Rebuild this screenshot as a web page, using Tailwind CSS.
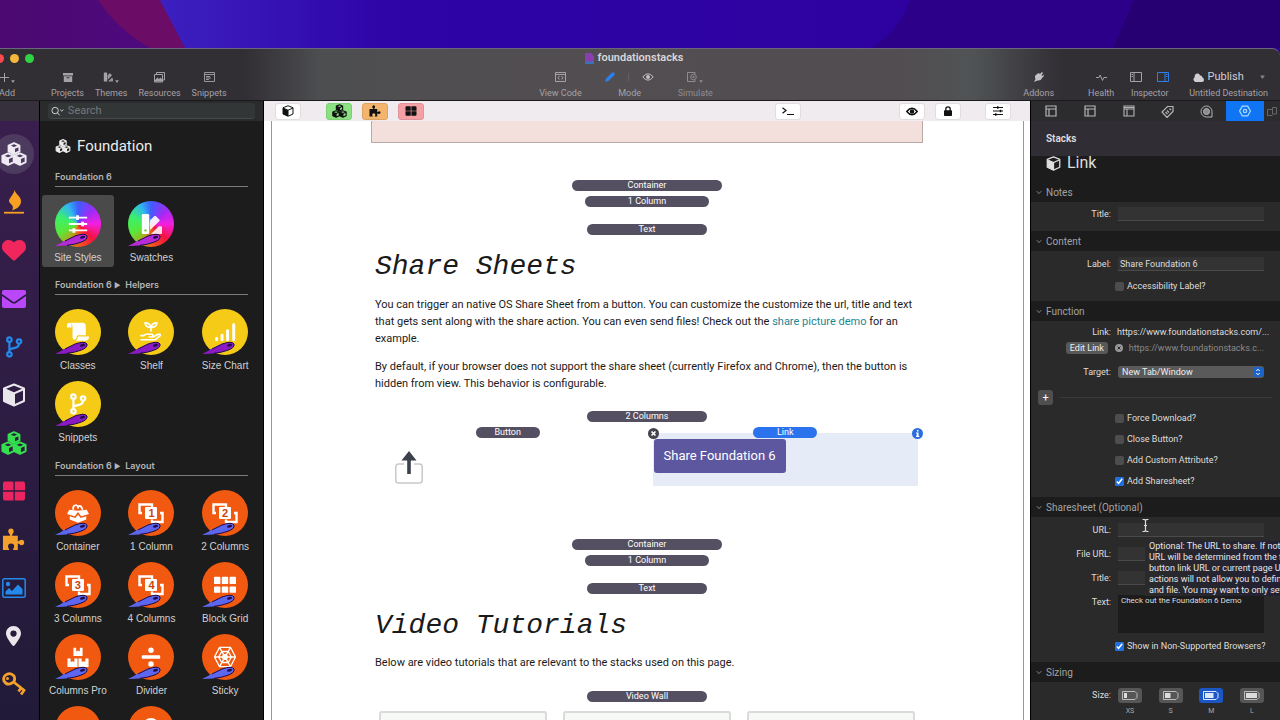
<!DOCTYPE html>
<html lang="en">
<head>
    <meta charset="UTF-8">
    <meta name="viewport" content="width=device-width, initial-scale=1.0">
    <title>foundationstacks</title>
    <script src="https://cdn.jsdelivr.net/npm/@tailwindcss/browser@4"></script>
</head>
<body class="h-screen overflow-hidden flex flex-col bg-[#2b0096] font-['Roboto',sans-serif] text-[9px] text-gray-200">

    <!-- Icon sprite -->
    <svg class="hidden">
        <symbol id="cube" viewBox="0 0 24 24">
            <path d="M12 1.5 22 5.5V18L12 22.5 2 18V5.5Z" fill="none" stroke="currentColor" stroke-width="2" stroke-linejoin="round"/>
            <path d="M2 6 12 10.5V22.5L2 18Z" fill="currentColor"/>
            <path d="M2 6 12 10.5 22 6M12 10.5V22" fill="none" stroke="currentColor" stroke-width="2"/>
        </symbol>
        <symbol id="cubes" viewBox="0 0 24 22">
            <g fill="none" stroke="currentColor" stroke-width="1.8" stroke-linejoin="round">
                <path d="M12 1 17 3.2V8.6L12 11 7 8.6V3.2ZM7 3.4 12 5.6 17 3.4M12 5.6V11"/>
                <path d="M6.5 10.5 11.7 12.7V18.4L6.5 21 1.3 18.4V12.7ZM1.3 12.8 6.5 15 11.7 12.8M6.5 15V21"/>
                <path d="M17.5 10.5 22.7 12.7V18.4L17.5 21 12.3 18.4V12.7ZM12.3 12.8 17.5 15 22.7 12.8M17.5 15V21"/>
            </g>
            <path d="M7 3.4 12 5.6V11L7 8.6ZM1.3 12.8 6.5 15V21L1.3 18.4ZM12.3 12.8 17.5 15V21L12.3 18.4Z" fill="currentColor"/>
        </symbol>
        <symbol id="flame" viewBox="0 0 24 24">
            <path d="M12.5 0C14 5 19.500 6.500 19 12C18.500 16 15 19 10 20.500C12 17 10.500 15.500 8 13C4.500 9.500 11.500 6 12.500 0Z" fill="currentColor"/>
            <path d="M2 21.800H22V23.600H2Z" fill="currentColor"/>
        </symbol>
        <symbol id="heart" viewBox="0 0 512 512">
            <path fill="currentColor" d="M47.6 300.4L228.3 469.1c7.5 7 17.4 10.9 27.7 10.9s20.2-3.9 27.7-10.9L464.4 300.4c30.4-28.3 47.6-68 47.6-109.500v-5.8c0-69.9-50.5-129.5-119.4-141C347 36.5 300.6 51.4 268 84L256 96 244 84c-32.6-32.6-79-47.5-124.6-39.900C50.5 55.6 0 115.2 0 185.1v5.8c0 41.5 17.2 81.2 47.6 109.5z"/>
        </symbol>
        <symbol id="mail" viewBox="0 0 24 24">
            <rect y="3" width="24" height="18" rx="2" fill="currentColor"/>
            <path d="M0 8 10 15Q12 16.400 14 15L24 8" fill="none" stroke="#2a1b42" stroke-width="1.6"/>
        </symbol>
        <symbol id="branch" viewBox="0 0 24 24">
            <g fill="none" stroke="currentColor" stroke-width="2.400">
                <circle cx="7" cy="4" r="2.4"/><circle cx="7" cy="20" r="2.4"/><circle cx="17.500" cy="6" r="2.4"/>
                <path d="M7 6.500V17.500M17.500 8.500C17.500 13 13 12.500 8 14.500"/>
            </g>
        </symbol>
        <symbol id="squares" viewBox="0 0 24 24">
            <path fill="currentColor" d="M3 2.500h7.500a1 1 0 0 1 1 1V11.300H1V4.500a2 2 0 0 1 2-2zM12.800 2.500H21a2 2 0 0 1 2 2v6.800H12.800zM1 12.700h10.500V21.500H3a2 2 0 0 1-2-2zM12.800 12.700H23v6.800a2 2 0 0 1-2 2h-8.200z"/>
        </symbol>
        <symbol id="puzzle" viewBox="0 0 24 24">
            <path fill="currentColor" d="M1 8H8.500C8.500 6.500 6.500 5.500 6.500 3.500A2.800 3 0 0 1 12.200 3.500C12.200 5.500 10.500 6.500 10.500 8H16.500V14C18 14 18.500 12.300 20.500 12.300A2.600 2.800 0 0 1 20.500 18C18.500 18 18 16.300 16.500 16.300V23H11.500C11.500 21.500 12.700 21 12.700 19.300A3.200 3 0 0 0 6.300 19.300C6.300 21 7.500 21.500 7.500 23H1Z"/>
        </symbol>
        <symbol id="photo" viewBox="0 0 24 24">
            <rect x=".8" y="2.800" width="22.400" height="18.400" rx="1.500" fill="none" stroke="currentColor" stroke-width="1.500"/>
            <circle cx="6" cy="8" r="2.200" fill="currentColor"/>
            <path d="M3.500 18.500V15.500L7 12 10 15 16 8.500 20.500 13V18.500Z" fill="currentColor"/>
        </symbol>
        <symbol id="pin" viewBox="0 0 384 512">
            <path fill="currentColor" fill-rule="evenodd" d="M215.7 499.2C267 435 384 279.4 384 192C384 86 298 0 192 0S0 86 0 192c0 87.4 117 243 168.3 307.2c12.3 15.3 35.1 15.3 47.4 0zM192 112a80 80 0 1 0 0 160 80 80 0 1 0 0-160z"/>
        </symbol>
        <symbol id="key" viewBox="0 0 24 24">
            <g fill="none" stroke="currentColor" stroke-width="2.800">
                <path d="M3 3.500Q8-.5 12 4 14 9 10 11 5 14 2 9 1 6 3 3.500Z"/>
                <path d="M11 9.500 23 19M19 16 16.500 19.500M22 18.500 19 22.500"/>
            </g>
            <circle cx="5.500" cy="6.500" r="1.500" fill="currentColor"/>
        </symbol>
        <symbol id="layout" viewBox="0 0 12 12">
            <path d="M1 1H11V11H1ZM1 4H11M4 4V11" fill="none" stroke="currentColor" stroke-width="1.200"/>
        </symbol>
        <symbol id="eye" viewBox="0 0 16 12">
            <path d="M1 6Q8-2.500 15 6 8 14.500 1 6Z" fill="none" stroke="currentColor" stroke-width="1.300"/>
            <circle cx="8" cy="6" r="2.600" fill="currentColor"/>
        </symbol>
        <symbol id="sliders" viewBox="0 0 24 24">
            <path d="M2 5H22M2 12H22M2 19H22" stroke="currentColor" stroke-width="2"/>
            <path d="M10 2.500h3v5h-3zM15.500 9.500h3v5h-3zM6 16.500h3v5H6z" fill="currentColor"/>
        </symbol>
        <symbol id="swatches" viewBox="0 0 24 24">
            <rect x="2" y="1" width="8" height="22" rx="1.500" fill="currentColor"/>
            <path d="M11 8 15.500 3.500Q16.500 2.500 17.500 3.500L21 7Q22 8 21 9L11 18.500Z" fill="currentColor" fill-opacity=".9"/>
            <path d="M12 23 20.500 14.500H23Q24 14.500 24 15.500V22Q24 23 23 23Z" fill="currentColor" fill-opacity=".85"/>
            <circle cx="6" cy="19" r="1.300" fill="#76c83a"/>
        </symbol>
        <symbol id="scroll" viewBox="0 0 24 24">
            <path d="M0 5Q0 2 2.500 2T5 5V7H0ZM4 2H17Q20.500 2 20.500 6V15.500H12Q10.500 15.500 10.500 17.500T8.500 20.500Q6 20.500 6 17V6Q6 3 4 2ZM12 17H24Q24 21.500 20 21.500H9.500Q12 20.500 12 17Z" fill="currentColor"/>
        </symbol>
        <symbol id="plant" viewBox="0 0 24 24">
            <g fill="none" stroke="currentColor" stroke-width="1.800" stroke-linecap="round" stroke-linejoin="round">
                <path d="M12 11V7Q11 2 5.500 2 6 7 12 7 18 7 18.500 2 13 2 12 7"/>
                <path d="M1 16H4Q7 13.500 10 14.500H13.500Q15 16.500 12.500 17.500H10M14 17.500 20 14.500Q23 14 22 16L16.500 20.500H1"/>
            </g>
        </symbol>
        <symbol id="chart" viewBox="0 0 24 24">
            <path d="M2.800 20.500V19M8.800 20.500V15.500M14.800 20.500V10.500M21.500 20.500V4" stroke="currentColor" stroke-width="3.200" stroke-linecap="round"/>
        </symbol>
        <symbol id="box" viewBox="0 0 24 24">
            <path d="M7 8.500Q6 4 9.500 3.500 11 3 12 5.500M12 5.500Q15 2 17 8.500M12 5.500V7" fill="none" stroke="currentColor" stroke-width="2"/>
            <path d="M2.500 8.500 12 9.500 21.500 8.500 24 13 15.500 15.500 12 11 8.500 15.500 0 13ZM3 15.500 9 17.500 12 14 15 17.500 21 15.500V19L12 22.500 3 19Z" fill="currentColor"/>
        </symbol>
        <symbol id="grid6" viewBox="0 0 24 24">
            <path fill="currentColor" d="M1 3h5a1 1 0 0 1 1 1v6a1 1 0 0 1-1 1H1a1 1 0 0 1-1-1V4a1 1 0 0 1 1-1zM9.500 3h5a1 1 0 0 1 1 1v6a1 1 0 0 1-1 1h-5a1 1 0 0 1-1-1V4a1 1 0 0 1 1-1zM18 3h5a1 1 0 0 1 1 1v6a1 1 0 0 1-1 1h-5a1 1 0 0 1-1-1V4a1 1 0 0 1 1-1zM1 13.500h5a1 1 0 0 1 1 1v5a1 1 0 0 1-1 1H1a1 1 0 0 1-1-1v-5a1 1 0 0 1 1-1zM9.500 13.500h5a1 1 0 0 1 1 1v5a1 1 0 0 1-1 1h-5a1 1 0 0 1-1-1v-5a1 1 0 0 1 1-1zM18 13.500h5a1 1 0 0 1 1 1v5a1 1 0 0 1-1 1h-5a1 1 0 0 1-1-1v-5a1 1 0 0 1 1-1z"/>
        </symbol>
        <symbol id="boxes" viewBox="0 0 24 24">
            <path fill="currentColor" d="M7 2h3v4l2-1 2 1V2h3v9H7zM.5 13.500h3.500v4l2-1 2 1v-4h3.500V23H.5zM12.500 13.500H16v4l2-1 2 1v-4h3.500V23h-11z"/>
        </symbol>
        <symbol id="divide" viewBox="0 0 24 24">
            <circle cx="12" cy="4.500" r="3" fill="currentColor"/><circle cx="12" cy="19.500" r="3" fill="currentColor"/>
            <rect x="2" y="10" width="20" height="4" rx="1" fill="currentColor"/>
        </symbol>
        <symbol id="web" viewBox="0 0 24 24">
            <path d="M6 1.500H18L23.500 12 18 22.500H6L.5 12ZM8.500 6H15.500L19 12 15.500 18H8.500L5 12ZM10.500 9.500H13.500L15 12 13.500 14.500H10.500L9 12ZM6 1.500 18 22.500M18 1.500 6 22.500M.5 12H23.500" fill="none" stroke="currentColor" stroke-width="1.400"/>
        </symbol>
        <symbol id="brackets" viewBox="0 0 26 22">
            <path d="M4 11H1.500V2.500H14V5M22 11H24.500V20H14V17.500" fill="none" stroke="currentColor" stroke-width="2.400"/>
            <rect x="7" y="5" width="12" height="12" rx="1" fill="currentColor"/>
        </symbol>
        <symbol id="comet" viewBox="0 0 34 14">
            <path d="M0 13 8 9 6 9.500 20 3Q30-.5 32 3 33 7 25 9.500 15 13 0 13Z" fill="currentColor"/>
            <path d="M10 8 20 3Q30-.5 32 3 33 7 25 9.500 20 11.500 12 12.300" fill="none" stroke="#1d0b4a" stroke-width="1"/>
            <ellipse cx="27.500" cy="4.300" rx="2.600" ry="1.300" transform="rotate(-15 27.500 4.300)" fill="#1d0b4a"/>
        </symbol>
        <symbol id="chevron" viewBox="0 0 8 6">
            <path d="M1 1.200 4 4.500 7 1.200" fill="none" stroke="currentColor" stroke-width="1"/>
        </symbol>
        <symbol id="caret" viewBox="0 0 6 5"><path d="M0 .5H6L3 5Z" fill="currentColor"/></symbol>
    </svg>

    <!-- Desktop wallpaper -->
    <div class="h-12 shrink-0">
        <svg class="w-full h-full" viewBox="0 0 1280 48" preserveAspectRatio="none">
            <defs>
                <linearGradient id="blue" x1="0" x2="1"><stop offset="0" stop-color="#3c20c0"/><stop offset=".2" stop-color="#2f04a8"/><stop offset="1" stop-color="#2b0098"/></linearGradient>
                <linearGradient id="plum" x1="0" x2="1"><stop offset="0" stop-color="#4a0970"/><stop offset="1" stop-color="#4f0a80"/></linearGradient>
            </defs>
            <path d="M0 0H170V48H0Z" fill="url(#plum)"/>
            <path d="M98 0H162L185 48H150Q118 30 98 0Z" fill="#6b0c66"/>
            <path d="M160 0H1280V48H185Z" fill="url(#blue)"/>
            <path d="M910 0H1280V48H872Q900 30 910 0Z" fill="#2c0089"/>
            <path d="M1134 0H1280V48H1113Z" fill="#260073"/>
        </svg>
    </div>

    <!-- Title bar -->
    <header class="h-[53px] shrink-0 rounded-tr-lg border-t border-[#6a6680] border-b border-b-[#1a1a1a] bg-[linear-gradient(90deg,#312e34_0%,#312e34_19%,#4c4e50_25%,#514e51_34%,#524d51_70%,#505355_76%,#312e34_83%,#312e34_100%)] text-[#a5a2a6]">
        <div class="h-[18px] grid grid-cols-[1fr_auto_1fr] items-center pr-3">
            <div class="flex gap-[6px] -ml-[5px]">
                <span class="size-[9px] rounded-full bg-[#fb4b50]"></span>
                <span class="size-[9px] rounded-full bg-[#f5b63e]"></span>
                <span class="size-[9px] rounded-full bg-[#2fd443]"></span>
            </div>
            <h1 class="flex items-center gap-1 text-[11px] font-semibold text-[#d8d6d9]">
                <svg class="w-[9px] h-[11px]" viewBox="0 0 9 11"><path d="M0 0H6L9 3V11H0Z" fill="#8a3fae"/><path d="M0 8.500H9V11H0Z" fill="#3b73b8"/></svg>
                foundationstacks
            </h1>
        </div>
        <div class="h-8 grid grid-cols-[1fr_auto_1fr] pr-3">
            <nav class="flex gap-[11px]">
                <button class="w-[26px] -ml-[6px] mr-5 flex flex-col items-center">
                    <span class="h-5 flex items-center gap-[2px]"><svg class="size-[9px]" viewBox="0 0 9 9"><path d="M4.500 0V9M0 4.500H9" stroke="currentColor"/></svg><svg class="w-1 h-[3px] mt-2"><use href="#caret"/></svg></span>Add
                </button>
                <button class="flex flex-col items-center">
                    <span class="h-5 flex items-center"><svg class="w-[10px] h-[9px]" viewBox="0 0 10 9"><path d="M0 0H10V2.500H0ZM.8 3.200H9.200V9H.8Z" fill="currentColor"/><path d="M3.500 4.800H6.500" stroke="#312e34"/></svg></span>Projects
                </button>
                <button class="flex flex-col items-center">
                    <span class="h-5 flex items-center gap-[2px]"><svg class="size-[10px]"><use href="#swatches"/></svg><svg class="w-1 h-[3px] mt-2"><use href="#caret"/></svg></span>Themes
                </button>
                <button class="flex flex-col items-center">
                    <span class="h-5 flex items-center"><svg class="size-[11px]" viewBox="0 0 11 11"><path d="M2.500 2V.5H10.500V8H9M.5 2.500H8.500V10H.5Z" fill="none" stroke="currentColor"/><path d="M1 9.500V8L3.500 5.500 5 7 6.500 5.500 8.500 8V9.500Z" fill="currentColor"/></svg></span>Resources
                </button>
                <button class="flex flex-col items-center">
                    <span class="h-5 flex items-center"><svg class="w-[11px] h-[10px]" viewBox="0 0 11 10"><path d="M.5.5H10.500V9.500H.5ZM.5 2.500H10.500M2 4.500H6M2 6H7M2 7.500H5" fill="none" stroke="currentColor" stroke-width=".9"/></svg></span>Snippets
                </button>
            </nav>
            <nav class="flex pr-4">
                <button class="flex flex-col items-center">
                    <span class="h-5 flex items-center"><svg class="w-[11px] h-[10px]" viewBox="0 0 11 10"><path d="M.5.5H10.500V9.500H.5ZM.5 2.500H10.500M4.500 4 3 5.800 4.500 7.500M6.500 4 8 5.800 6.500 7.500" fill="none" stroke="currentColor"/></svg></span>View Code
                </button>
                <div class="w-[96px] flex flex-col items-center">
                    <span class="h-5 flex items-center gap-[13px]">
                        <button aria-label="Edit"><svg class="block size-[10px]" viewBox="0 0 10 10"><path d="M0 10 1 6.500 6.500 1Q8-.5 9.200.8T9 3.500L3.500 9Z" fill="#2f7fe8"/></svg></button>
                        <span class="w-px h-2 bg-white/10"></span>
                        <button aria-label="Preview"><svg class="block w-3 h-[10px] text-[#c4c2c5]"><use href="#eye"/></svg></button>
                    </span>Mode
                </div>
                <button class="flex flex-col items-center text-[#8f8c90]">
                    <span class="h-5 flex items-center gap-[2px]"><svg class="size-[10px]" viewBox="0 0 10 10"><path d="M8 2V.5H.5V9.500H8V8" fill="none" stroke="currentColor"/><circle cx="6.500" cy="5" r="2.800" fill="none" stroke="currentColor"/><circle cx="6.500" cy="5" r="1.100" fill="currentColor"/></svg><svg class="w-1 h-[3px] mt-2"><use href="#caret"/></svg></span>Simulate
                </button>
            </nav>
            <nav class="flex justify-end">
                <button class="mr-[34px] flex flex-col items-center">
                    <span class="h-5 flex items-center"><svg class="size-[10px]" viewBox="0 0 10 10"><path d="M0 10 1.500 7Q0 4 2.500 2.500L4.500 1 6 2 8 0 9 1 7.500 3 8 4 10 2.500 9.500 4.500 8 6Q7 9 3.500 8.500Z" fill="#c4c2c5"/></svg></span>Addons
                </button>
                <button class="mr-4 flex flex-col items-center">
                    <span class="h-5 flex items-center"><svg class="w-[11px] h-[9px]" viewBox="0 0 11 9"><path d="M0 4.500H3L4.200 2 6.500 7.500 7.800 4.500H11" fill="none" stroke="currentColor"/></svg></span>Health
                </button>
                <div class="mr-5 flex flex-col items-center">
                    <span class="h-5 flex items-center gap-[15px]">
                        <button aria-label="Left sidebar"><svg class="block w-3 h-[10px]" viewBox="0 0 12 10"><path d="M.5.5H11.500V9.500H.5ZM4 .5V9.500M1.500 2.500H3M1.500 4.500H3" fill="none" stroke="currentColor"/></svg></button>
                        <button aria-label="Right sidebar"><svg class="block w-3 h-[10px] text-[#2f7fe8]" viewBox="0 0 12 10"><path d="M.5.5H11.500V9.500H.5ZM8 .5V9.500M9 2.500H10.500M9 4.500H10.500" fill="none" stroke="currentColor"/></svg></button>
                    </span>Inspector
                </div>
                <button class="flex flex-col items-center">
                    <span class="h-5 flex items-center gap-1 text-[11px] text-[#d0ced1]"><svg class="w-[11px] h-[9px]" viewBox="0 0 11 9"><path d="M2.500 9A2.500 2.500 0 0 1 1.500 4.500Q1.500 1 4 .5T7 2.500Q9 2 9.500 4.500 11 5 11 7T9 9Z" fill="currentColor"/></svg>Publish<svg class="ml-3 w-[5px] h-1 text-[#85828a]"><use href="#caret"/></svg></span>Untitled Destination
                </button>
            </nav>
        </div>
    </header>

    <div class="flex-1 min-h-0 flex">

        <!-- Icon rail -->
        <nav class="w-10 shrink-0 border-r border-black bg-linear-to-b from-[#3a1f4e] to-[#211a38] flex flex-col">
            <div class="h-5 shrink-0 bg-[#35303c]"></div>
            <div class="flex-1 grid grid-rows-12 pt-[9px] pb-3 w-[27px] justify-items-center items-center">
                <a href="#" aria-label="Foundation" class="size-10 -mx-[7px] rounded-full bg-[#4d3a5f] flex items-center justify-center text-[#eeeaf2]"><svg class="w-[26px] h-[24px]"><use href="#cubes"/></svg></a>
                <a href="#" aria-label="Flame" class="text-[#f7a024]"><svg class="size-6"><use href="#flame"/></svg></a>
                <a href="#" aria-label="Favourites" class="text-[#f0265c]"><svg class="size-6"><use href="#heart"/></svg></a>
                <a href="#" aria-label="Mail" class="text-[#bb47fa]"><svg class="size-6"><use href="#mail"/></svg></a>
                <a href="#" aria-label="Branches" class="text-[#2389ea]"><svg class="size-[22px]"><use href="#branch"/></svg></a>
                <a href="#" aria-label="Stacks" class="text-[#e9e7ec]"><svg class="size-6"><use href="#cube"/></svg></a>
                <a href="#" aria-label="Groups" class="text-[#35e04f]"><svg class="w-[26px] h-[24px]"><use href="#cubes"/></svg></a>
                <a href="#" aria-label="Templates" class="text-[#ec2460]"><svg class="size-6"><use href="#squares"/></svg></a>
                <a href="#" aria-label="Partials" class="text-[#f3a02c]"><svg class="size-[23px]"><use href="#puzzle"/></svg></a>
                <a href="#" aria-label="Images" class="text-[#2389ea]"><svg class="size-6"><use href="#photo"/></svg></a>
                <a href="#" aria-label="Maps" class="text-[#e9e7ec]"><svg class="w-[15px] h-5"><use href="#pin"/></svg></a>
                <a href="#" aria-label="Keys" class="text-[#f3a02c]"><svg class="size-6"><use href="#key"/></svg></a>
            </div>
        </nav>

        <!-- Stacks library -->
        <aside class="w-[224px] shrink-0 border-r border-black bg-[#1c1c1c] flex flex-col overflow-hidden">
            <div class="h-5 shrink-0 bg-[#2a2b2c] px-2 flex items-center">
                <label class="h-4 flex-1 flex items-center gap-1 rounded bg-[#333637] border-b border-[#45494a] pl-[3px]">
                    <svg class="w-[14px] h-[10px]" viewBox="0 0 14 10"><circle cx="4.500" cy="4.500" r="3.500" fill="none" stroke="#ddd"/><path d="M7 7 9.500 9.800M10 3.500 11.800 5.200 13.500 3.500" fill="none" stroke="#ddd"/></svg>
                    <input type="text" placeholder="Search" aria-label="Search" class="w-full pt-px bg-transparent text-[11px] placeholder-[#75787a] outline-none">
                </label>
            </div>
            <div class="px-[15px]">
                <h2 class="mt-4 h-[18px] flex items-center gap-[6px] text-[15px] text-[#ececec]"><svg class="w-4 h-[14px]"><use href="#cubes"/></svg>Foundation</h2>
                <h3 class="mt-4 h-4 border-b border-[#7c7c7c] font-['Inter',sans-serif] font-semibold leading-3 text-[#b4b4b4]">Foundation 6</h3>
                <div id="styles" class="grid grid-cols-3 gap-x-[2px] -mx-[13px] mt-2"></div>
                <h3 class="mt-3 h-4 border-b border-[#7c7c7c] font-['Inter',sans-serif] font-semibold leading-3 text-[#b4b4b4]">Foundation 6 <span class="text-[7px]">▶</span>&nbsp; Helpers</h3>
                <div id="helpers" class="grid grid-cols-3 gap-x-[2px] -mx-[13px] mt-2"></div>
                <h3 class="mt-[13px] h-4 border-b border-[#7c7c7c] font-['Inter',sans-serif] font-semibold leading-3 text-[#b4b4b4]">Foundation 6 <span class="text-[7px]">▶</span>&nbsp; Layout</h3>
                <div id="layouts" class="grid grid-cols-3 gap-x-[2px] -mx-[13px] mt-2"></div>
            </div>
        </aside>

        <!-- Canvas -->
        <main class="flex-1 min-w-0 flex flex-col bg-white text-[#1a1a1a] overflow-hidden">
            <div class="h-5 shrink-0 flex items-center bg-[#efebef] pl-[11px] pr-[19px] text-[#111]">
                <button aria-label="Stack" class="w-[26px] h-[17px] rounded-[3px] border border-[#e0dce0] bg-white flex items-center justify-center"><svg class="size-3"><use href="#cube"/></svg></button>
                <button aria-label="Groups" class="ml-[25px] w-[26px] h-[17px] rounded-[3px] bg-[#8be181] border border-[#7ccf73] flex items-center justify-center"><svg class="w-[15px] h-[14px]"><use href="#cubes"/></svg></button>
                <button aria-label="Partials" class="ml-[10px] w-[26px] h-[17px] rounded-[3px] bg-[#f3b56d] border border-[#dda35f] flex items-center justify-center"><svg class="size-3"><use href="#puzzle"/></svg></button>
                <button aria-label="Templates" class="ml-[10px] w-[26px] h-[17px] rounded-[3px] bg-[#f4a0a5] border border-[#e0939a] flex items-center justify-center"><svg class="w-3 h-3"><use href="#squares"/></svg></button>
                <button aria-label="Console" class="ml-auto w-[26px] h-[17px] rounded-[3px] border border-[#e0dce0] bg-white flex items-center justify-center"><svg class="w-3 h-2" viewBox="0 0 12 8"><path d="M.5.8 4 3.500.5 6.200M5 7.500H12" fill="none" stroke="currentColor" stroke-width="1.200"/></svg></button>
                <button aria-label="Preview" class="ml-[98px] w-[26px] h-[17px] rounded-[3px] border border-[#e0dce0] bg-white flex items-center justify-center"><svg class="w-3 h-[9px]" viewBox="0 0 16 12"><path d="M1 6Q8-2.500 15 6 8 14.500 1 6Z" fill="none" stroke="currentColor" stroke-width="2"/><circle cx="8" cy="6" r="3" fill="currentColor"/></svg></button>
                <button aria-label="Lock" class="ml-[10px] w-[26px] h-[17px] rounded-[3px] border border-[#e0dce0] bg-white flex items-center justify-center"><svg class="w-2 h-[10px]" viewBox="0 0 8 10"><rect y="4.300" width="8" height="5.700" rx=".8" fill="currentColor"/><path d="M1.800 5V3A2.200 2.200 0 0 1 6.200 3V5" fill="none" stroke="currentColor" stroke-width="1.300"/></svg></button>
                <button aria-label="Settings" class="ml-6 w-[26px] h-[17px] rounded-[3px] border border-[#e0dce0] bg-white flex items-center justify-center"><svg class="size-3"><use href="#sliders"/></svg></button>
            </div>

            <div class="flex-1 min-h-0 ml-[7px] mr-[6px] border-x border-[#99959b] pl-[99px] pr-[100px]">
                <div class="h-[22px] bg-[#f3dfdc] border border-t-0 border-[#b9a8a6]"></div>
                <div class="px-1 text-[11px] leading-[17px]">
                    <div class="pt-[37px] flex flex-col items-center">
                        <span class="w-[150px] h-[11px] rounded-full bg-[#545061] text-white text-center text-[9px] leading-[11px]">Container</span>
                        <span class="mt-[5px] w-[124px] h-[11px] rounded-full bg-[#545061] text-white text-center text-[9px] leading-[11px]">1 Column</span>
                        <span class="mt-[17px] w-[120px] h-[11px] rounded-full bg-[#545061] text-white text-center text-[9px] leading-[11px]">Text</span>
                    </div>
                    <h2 class="mt-4 font-['Liberation_Mono',monospace] italic text-[28px] leading-[32px]">Share Sheets</h2>
                    <p class="mt-[13px]">You can trigger an native OS Share Sheet from a button. You can customize the customize the url, title and text that gets sent along with the share action. You can even send files! Check out the <a href="#" class="text-[#1b8795]">share picture demo</a> for an example.</p>
                    <p class="mt-[11px]">By default, if your browser does not support the share sheet (currently Firefox and Chrome), then the button is hidden from view. This behavior is configurable.</p>
                    <div class="mt-[19px] flex justify-center">
                        <span class="w-[120px] h-[11px] rounded-full bg-[#545061] text-white text-center text-[9px] leading-[11px]">2 Columns</span>
                    </div>
                    <div class="mt-[5px] pr-px grid grid-cols-2 gap-3 h-[60px]">
                        <div class="flex flex-col">
                            <span class="self-center w-16 h-[11px] rounded-full bg-[#545061] text-white text-center text-[9px] leading-[11px]">Button</span>
                            <button aria-label="Share" class="ml-5 mt-3 w-[28px] h-[34px]">
                                <svg class="w-full h-full" viewBox="0 0 28 34"><path d="M9 14H3.500Q.8 14 .8 17V30Q.8 33 3.500 33H24.500Q27.200 33 27.200 30V17Q27.200 14 24.500 14H19" fill="none" stroke="#c9c9cb" stroke-width="1.500"/><path d="M14 1 21.500 10.500H15.800V24H12.200V10.500H6.500Z" fill="#3c404b"/></svg>
                            </button>
                        </div>
                        <div class="relative mt-[6px] h-[53px] bg-[#e5ecf8]">
                            <span class="absolute -top-[6px] left-1/2 -translate-x-1/2 w-16 h-[11px] rounded-full bg-[#2a73ec] text-white text-center text-[9px] leading-[11px]">Link</span>
                            <button aria-label="Remove" class="absolute -top-[5px] -left-[5px] size-[11px]"><svg class="w-full h-full" viewBox="0 0 11 11"><circle cx="5.500" cy="5.500" r="5.500" fill="#45434c"/><path d="M3.500 3.500 7.500 7.500M7.500 3.500 3.500 7.500" stroke="#fff" stroke-width="1.700"/></svg></button>
                            <button aria-label="Info" class="absolute -top-[5px] -right-[5px] size-[11px]"><svg class="w-full h-full" viewBox="0 0 11 11"><circle cx="5.500" cy="5.500" r="5.500" fill="#2c6cdc"/><path d="M5 2H6.500V3.500H5ZM4 4.500H6.500V7.800H7.300V9H4V7.800H4.800V5.600H4Z" fill="#fff"/></svg></button>
                            <a href="#" class="absolute left-px top-[6px] h-[34px] px-[10px] rounded-[3px] bg-[#5d579f] text-white text-[13px] leading-[34px] whitespace-nowrap">Share Foundation 6</a>
                        </div>
                    </div>
                    <div class="mt-[52px] flex flex-col items-center">
                        <span class="w-[150px] h-[11px] rounded-full bg-[#545061] text-white text-center text-[9px] leading-[11px]">Container</span>
                        <span class="mt-[5px] w-[124px] h-[11px] rounded-full bg-[#545061] text-white text-center text-[9px] leading-[11px]">1 Column</span>
                        <span class="mt-[17px] w-[120px] h-[11px] rounded-full bg-[#545061] text-white text-center text-[9px] leading-[11px]">Text</span>
                    </div>
                    <h2 class="mt-4 font-['Liberation_Mono',monospace] italic text-[28px] leading-[32px]">Video Tutorials</h2>
                    <p class="mt-3">Below are video tutorials that are relevant to the stacks used on this page.</p>
                    <div class="mt-5 flex justify-center">
                        <span class="w-[120px] h-[11px] rounded-full bg-[#545061] text-white text-center text-[9px] leading-[11px]">Video Wall</span>
                    </div>
                    <div class="mt-[9px] px-1 grid grid-cols-3 gap-4">
                        <div class="h-40 border-2 border-[#d9dad9] bg-[#f7f9f7] rounded-[3px]"></div>
                        <div class="h-40 border-2 border-[#d9dad9] bg-[#f7f9f7] rounded-[3px]"></div>
                        <div class="h-40 border-2 border-[#d9dad9] bg-[#f7f9f7] rounded-[3px]"></div>
                    </div>
                </div>
            </div>
        </main>

        <!-- Inspector -->
        <aside class="relative w-[250px] shrink-0 border-l border-black bg-[#2a2a2a] overflow-hidden text-[#dedede]">
            <nav class="h-5 flex items-center bg-[#2c2c2e] text-[#b5b5b7]">
                <button aria-label="Page" class="w-[39px] flex justify-center"><svg class="size-3"><use href="#layout"/></svg></button>
                <button aria-label="Layout" class="w-[39px] flex justify-center"><svg class="size-3"><use href="#layout"/></svg></button>
                <button aria-label="Header" class="w-[39px] flex justify-center"><svg class="size-3" viewBox="0 0 12 12"><path d="M1 1H11V11H1ZM4 4V11M1 2.500H11M1 4H11" fill="none" stroke="currentColor" stroke-width="1.100"/></svg></button>
                <button aria-label="Tags" class="w-[39px] flex justify-center"><svg class="size-[13px]" viewBox="0 0 13 13"><path d="M6.500 1.500H12V6.500L6 12.500 1 7ZM8.500 3.500 10 5M4.500 7 6.500 9M6 5.500 8 7.500" fill="none" stroke="currentColor" stroke-width="1.200"/></svg></button>
                <button aria-label="Focus" class="w-[39px] flex justify-center"><svg class="size-[13px]" viewBox="0 0 13 13"><path d="M12 6.500A5.500 5.500 0 1 0 6.500 12H12Z" fill="none" stroke="currentColor"/><circle cx="6.500" cy="6.500" r="3" fill="#8c8c8e" stroke="currentColor"/></svg></button>
                <button aria-label="Stacks" class="w-[38px] h-5 bg-[#0f75f5] flex justify-center items-center text-[#a9dcff]"><svg class="size-3" viewBox="0 0 12 12"><path d="M3.300 1.200H8.700L11.400 6 8.700 10.800H3.300L.6 6Z" fill="none" stroke="currentColor" stroke-width="1.200"/><circle cx="6" cy="6" r="1.700" fill="none" stroke="currentColor" stroke-width="1.200"/></svg></button>
                <button aria-label="More" class="ml-[3px] text-[#67676a]"><svg class="w-[10px] h-[9px]" viewBox="0 0 10 9"><path d="M5.500 2.500H.5V8.500H5.500M5.500.5H9.500V7H5.500Z" fill="none" stroke="currentColor"/></svg></button>
            </nav>
            <h2 class="h-[35px] pl-[15px] flex items-center bg-[#302e34] text-[10px] font-semibold">Stacks</h2>
            <div class="h-[26px] bg-[#1c1c1c] pl-[15px] flex items-start gap-[6px] text-[16px] leading-[14px]"><svg class="size-[15px]"><use href="#cube"/></svg>Link</div>

            <h3 class="h-5 bg-[#1c1c1c] pl-[5px] flex items-center gap-[4px] text-[10px] text-[#a3a3a3]"><svg class="w-[6px] h-[5px]"><use href="#chevron"/></svg>Notes</h3>
            <div class="h-[29px] grid grid-cols-[80px_1fr] gap-x-[7px] pr-4 pt-[5px]">
                <label for="noteTitle" class="text-right leading-[14px]">Title:</label>
                <input id="noteTitle" type="text" class="w-full h-[14px] bg-[#333] border-b border-[#4a4a4a]">
            </div>

            <h3 class="h-5 bg-[#1c1c1c] pl-[5px] flex items-center gap-[4px] text-[10px] text-[#a3a3a3]"><svg class="w-[6px] h-[5px]"><use href="#chevron"/></svg>Content</h3>
            <div class="h-[50px] pt-[6px] pr-4">
                <div class="grid grid-cols-[80px_1fr] gap-x-[7px]">
                    <label for="label" class="text-right leading-[14px]">Label:</label>
                    <input id="label" type="text" value="Share Foundation 6" class="w-full h-[14px] px-[2px] bg-[#333] border-b border-[#4a4a4a]">
                </div>
                <label class="mt-[9px] ml-[84px] flex items-center gap-[3px] leading-3"><input type="checkbox" class="appearance-none size-[9px] rounded-[2px] bg-[#4d4d4d]">Accessibility Label?</label>
            </div>

            <h3 class="h-5 bg-[#1c1c1c] pl-[5px] flex items-center gap-[4px] text-[10px] text-[#a3a3a3]"><svg class="w-[6px] h-[5px]"><use href="#chevron"/></svg>Function</h3>
            <div class="h-[176px] pt-1 pr-4">
                <div class="grid grid-cols-[80px_1fr] gap-x-[6px] leading-[14px]">
                    <span class="text-right">Link:</span>
                    <span class="whitespace-nowrap">https://www.foundationstacks.com/...</span>
                </div>
                <div class="mt-[3px] flex items-center leading-3">
                    <button class="ml-[35px] w-[45px] h-3 rounded-[3px] bg-[#585858] text-[#eee]">Edit Link</button>
                    <button aria-label="Clear link" class="ml-[7px] size-2"><svg class="size-2" viewBox="0 0 8 8"><circle cx="4" cy="4" r="4" fill="#9a9a9a"/><path d="M2.500 2.500 5.500 5.500M5.500 2.500 2.500 5.500" stroke="#2a2a2a"/></svg></button>
                    <span class="ml-[6px] whitespace-nowrap text-[#8b8b8b]">https://www.foundationstacks.c...</span>
                </div>
                <div class="mt-3 grid grid-cols-[80px_1fr] gap-x-[7px] leading-3">
                    <label for="target" class="text-right">Target:</label>
                    <span class="relative">
                        <select id="target" class="block w-full h-3 appearance-none rounded-[3px] bg-[#5a5a5a] pl-1 leading-3 text-[#eee]"><option>New Tab/Window</option><option>Same Window</option></select>
                        <svg class="absolute right-px top-px size-[10px] pointer-events-none" viewBox="0 0 10 10"><rect width="10" height="10" rx="2" fill="#1b64c9"/><path d="M3.300 4 5 2.200 6.700 4M3.300 6 5 7.800 6.700 6" fill="none" stroke="#fff"/></svg>
                    </span>
                </div>
                <div class="mt-3 ml-[7px] -mr-2 flex items-center gap-[7px]">
                    <button class="size-[15px] rounded-[3px] bg-[#4f4f4f] text-[11px] leading-[14px] text-white">+</button>
                    <hr class="flex-1 border-[#3a3a3a]">
                </div>
                <label class="mt-[7px] ml-[84px] flex items-center gap-[3px] leading-3"><input type="checkbox" class="appearance-none size-[9px] rounded-[2px] bg-[#4d4d4d]">Force Download?</label>
                <label class="mt-[9px] ml-[84px] flex items-center gap-[3px] leading-3"><input type="checkbox" class="appearance-none size-[9px] rounded-[2px] bg-[#4d4d4d]">Close Button?</label>
                <label class="mt-[9px] ml-[84px] flex items-center gap-[3px] leading-3"><input type="checkbox" class="appearance-none size-[9px] rounded-[2px] bg-[#4d4d4d]">Add Custom Attribute?</label>
                <label class="mt-[9px] ml-[84px] flex items-center gap-[3px] leading-3"><input type="checkbox" checked class="size-[9px] accent-[#1f6fe0]">Add Sharesheet?</label>
            </div>

            <h3 class="h-5 bg-[#1c1c1c] pl-[5px] flex items-center gap-[4px] text-[10px] text-[#a3a3a3]"><svg class="w-[6px] h-[5px]"><use href="#chevron"/></svg>Sharesheet (Optional)</h3>
            <div class="h-[145px] pt-[6px] pr-4">
                <div class="grid grid-cols-[80px_1fr] gap-x-[7px] gap-y-[10px] leading-[14px]">
                    <label for="url" class="text-right">URL:</label>
                    <input id="url" type="text" class="w-full h-[14px] bg-[#333] border-b border-[#4a4a4a]">
                    <label for="fileUrl" class="text-right">File URL:</label>
                    <input id="fileUrl" type="text" class="w-full h-[14px] bg-[#333] border-b border-[#4a4a4a]">
                    <label for="shareTitle" class="text-right">Title:</label>
                    <input id="shareTitle" type="text" class="w-full h-[14px] bg-[#333] border-b border-[#4a4a4a]">
                    <label for="shareText" class="text-right">Text:</label>
                    <textarea id="shareText" class="block w-full h-[38px] resize-none bg-[#1c1c1c] px-[3px] pt-px text-[8px] leading-[10px]">Check out the Foundation 6 Demo</textarea>
                </div>
                <label class="mt-[7px] ml-[84px] flex items-center gap-[3px] leading-3 whitespace-nowrap"><input type="checkbox" checked class="size-[9px] accent-[#1f6fe0]">Show in Non-Supported Browsers?</label>
            </div>

            <h3 class="h-5 bg-[#1c1c1c] pl-[5px] flex items-center gap-[4px] text-[10px] text-[#a3a3a3]"><svg class="w-[6px] h-[5px]"><use href="#chevron"/></svg>Sizing</h3>
            <div class="grid grid-cols-[80px_1fr] gap-x-[7px] pr-4 pt-[6px]">
                <span class="text-right leading-[15px]">Size:</span>
                <div class="flex justify-between text-[7px] leading-[17px] text-[#a8a8a8]">
                    <button class="w-6"><span class="h-[15px] rounded-[3px] bg-[#565656] flex items-center justify-center"><svg class="w-4 h-[9px]" viewBox="0 0 16 9"><path d="M.5.5H13L15 2.500V6.500L13 8.500H.5Z" fill="none" stroke="#bbb"/><path d="M2 2H5V7H2Z" fill="#ddd"/></svg></span>XS</button>
                    <button class="w-6"><span class="h-[15px] rounded-[3px] bg-[#565656] flex items-center justify-center"><svg class="w-4 h-[9px]" viewBox="0 0 16 9"><path d="M.5.5H13L15 2.500V6.500L13 8.500H.5Z" fill="none" stroke="#bbb"/><path d="M2 2H7.500V7H2Z" fill="#ddd"/></svg></span>S</button>
                    <button class="w-6"><span class="h-[15px] rounded-[3px] bg-[#1c55c4] flex items-center justify-center"><svg class="w-4 h-[9px]" viewBox="0 0 16 9"><path d="M.5.5H13L15 2.500V6.500L13 8.500H.5Z" fill="none" stroke="#dbe6ff"/><path d="M2 2H10.500V7H2Z" fill="#dbe6ff"/></svg></span>M</button>
                    <button class="w-6"><span class="h-[15px] rounded-[3px] bg-[#565656] flex items-center justify-center"><svg class="w-4 h-[9px]" viewBox="0 0 16 9"><path d="M.5.5H13L15 2.500V6.500L13 8.500H.5Z" fill="none" stroke="#bbb"/><path d="M2 2H13V7H2Z" fill="#ddd"/></svg></span>L</button>
                </div>
            </div>

            <!-- Tooltip -->
            <div role="tooltip" class="absolute left-[114px] top-[440px] w-[200px] pl-[4px] bg-linear-to-r from-[#2a2a2c] to-[#1f1a36] text-[9px] leading-[11px] text-[#e6e6e6] whitespace-nowrap">Optional: The URL to share. If not set the<br>URL will be determined from the first<br>button link URL or current page URL. Some<br>actions will not allow you to define a URL<br>and file. You may want to only set one</div>
            <svg class="absolute left-[111px] top-[418px] w-[7px] h-[13px]" viewBox="0 0 7 13"><path d="M.5.5H2.500L3.500 1.500 4.500.5H6.500M3.500 1V12M.5 12.500H2.500L3.500 11.500 4.500 12.500H6.500M2 6.500H5" fill="none" stroke="#ddd" stroke-width="1.200"/></svg>
        </aside>
    </div>

    <script>
        const styles = [
            { name: "Site Styles", icon: "sliders", selected: true },
            { name: "Swatches", icon: "swatches" }
        ];
        const helpers = [
            { name: "Classes", icon: "scroll" },
            { name: "Shelf", icon: "plant" },
            { name: "Size Chart", icon: "chart" },
            { name: "Snippets", icon: "branch" }
        ];
        const layouts = [
            { name: "Container", icon: "box" },
            { name: "1 Column", icon: "brackets", digit: "1" },
            { name: "2 Columns", icon: "brackets", digit: "2" },
            { name: "3 Columns", icon: "brackets", digit: "3" },
            { name: "4 Columns", icon: "brackets", digit: "4" },
            { name: "Block Grid", icon: "grid6" },
            { name: "Columns Pro", icon: "boxes" },
            { name: "Divider", icon: "divide" },
            { name: "Sticky", icon: "web" },
            { name: "Tabs", icon: "squares" },
            { name: "Pin", icon: "pin" }
        ];

        function renderTiles(id, tiles, disc, comet) {
            document.getElementById(id).innerHTML = tiles.map(t => `
                <button class="h-[72px] flex flex-col items-center pt-[6px] rounded-[3px] text-[10px] leading-3 whitespace-nowrap font-['Liberation_Sans',sans-serif] text-[#d2d2d2] ${t.selected ? "bg-[#4a4a4a]" : ""}">
                    <span class="relative size-[46px] rounded-full flex items-center justify-center text-white ${disc}">
                        <svg class="${t.digit ? "w-[26px] h-[22px]" : "size-[22px]"}"><use href="#${t.icon}"/></svg>
                        ${t.digit ? `<span class="absolute inset-0 flex items-center justify-center text-[11px] font-bold text-[#c8440a]">${t.digit}</span>` : ""}
                        <svg class="absolute left-0 bottom-0 w-[34px] h-[14px] ${comet}"><use href="#comet"/></svg>
                    </span>
                    <span class="mt-[5px]">${t.name}</span>
                </button>`).join("");
        }

        renderTiles("styles", styles, "bg-[conic-gradient(#3f5cff,#a32af5_50deg,#f31fe0_90deg,#f5123f_135deg,#f2551c_175deg,#b9a11a_205deg,#58e83a_245deg,#3cf06a_290deg,#2fb8f0_330deg,#3f5cff)]", "text-[#b52cd6]");
        renderTiles("helpers", helpers, "bg-[#f5cb18]", "text-[#8a1ac4]");
        renderTiles("layouts", layouts, "bg-[#f0590f]", "text-[#5c66ee]");
    </script>
</body>
</html>
